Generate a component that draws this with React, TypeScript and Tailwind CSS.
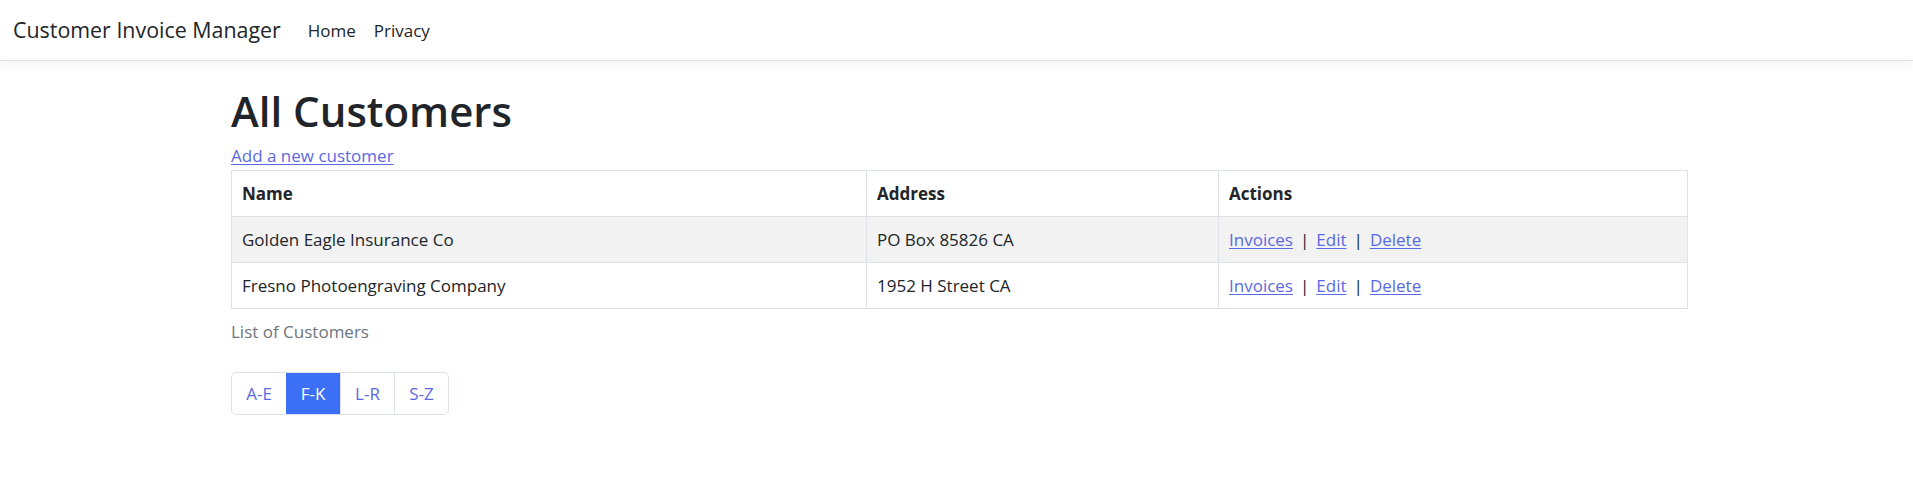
import React from "react";

const customers = [
  { name: "Golden Eagle Insurance Co", address: "PO Box 85826 CA" },
  { name: "Fresno Photoengraving Company", address: "1952 H Street CA" },
];

const pages = ["A-E", "F-K", "L-R", "S-Z"];

export default function App() {
  return (
    <div
      className="min-h-[488px] bg-white text-[#212529] text-[18px]"
      style={{ fontFamily: '"Open Sans", "Noto Sans", sans-serif' }}
    >
      <header className="flex h-[61px] items-center border-b border-[#dee2e6] bg-white px-[13px] shadow-[0_4px_13px_rgba(0,0,0,0.05)]">
        <a className="mr-[18px] text-[21.4px] leading-[30px] text-[#212529]">Customer Invoice Manager</a>
        <nav className="flex">
          <a className="px-[9px] text-[17px] leading-[27px] text-[#212529]">Home</a>
          <a className="px-[9px] text-[17px] leading-[27px] text-[#212529]">Privacy</a>
        </nav>
      </header>

      <main className="ml-[231px] w-[1457px]">
        <h1 className="mt-[23px] text-[42px] font-semibold leading-[54px]">All Customers</h1>
        <a className="mt-[4px] block h-[27px] w-fit text-[17px] leading-[27px] text-[#5a6ae4] underline underline-offset-2">
          Add a new customer
        </a>
        <table className="mt-[1px] w-full border-collapse">
          <colgroup>
            <col className="w-[635px]" />
            <col className="w-[352px]" />
            <col />
          </colgroup>
          <thead>
            <tr>
              <th className="h-[46px] border border-[#dee2e6] px-[10px] text-left text-[17px] font-bold">Name</th>
              <th className="h-[46px] border border-[#dee2e6] px-[10px] text-left text-[17px] font-bold">Address</th>
              <th className="h-[46px] border border-[#dee2e6] px-[10px] text-left text-[17px] font-bold">Actions</th>
            </tr>
          </thead>
          <tbody>
            {customers.map((c, i) => (
              <tr key={c.name} className={i % 2 === 0 ? "bg-[#f2f2f2]" : "bg-white"}>
                <td className="h-[46px] border border-[#dee2e6] px-[10px] text-[17px]">{c.name}</td>
                <td className="h-[46px] border border-[#dee2e6] px-[10px] text-[17px]">{c.address}</td>
                <td className="h-[46px] border border-[#dee2e6] px-[10px] text-[17px]">
                  <a className="text-[#5a6ae4] underline underline-offset-2">Invoices</a>
                  <span className="mx-[7px]">|</span>
                  <a className="text-[#5a6ae4] underline underline-offset-2">Edit</a>
                  <span className="mx-[7px]">|</span>
                  <a className="text-[#5a6ae4] underline underline-offset-2">Delete</a>
                </td>
              </tr>
            ))}
          </tbody>
        </table>
        <div className="py-[9px] text-[17px] leading-[27px] text-[#6c757d]">List of Customers</div>

        <div className="mt-[18px] flex w-fit rounded-[5px] border border-[#dee2e6]">
          {pages.map((p, i) => (
            <span
              key={p}
              className={
                i === 1
                  ? "flex h-[41px] w-[54px] items-center justify-center bg-[#3a6ff6] text-[17px] text-white"
                  : i === 0
                  ? "flex h-[41px] w-[54px] items-center justify-center text-[17px] text-[#5a6ae4]"
                  : "flex h-[41px] w-[54px] items-center justify-center border-l border-[#dee2e6] text-[17px] text-[#5a6ae4]"
              }
            >
              {p}
            </span>
          ))}
        </div>
      </main>
    </div>
  );
}
